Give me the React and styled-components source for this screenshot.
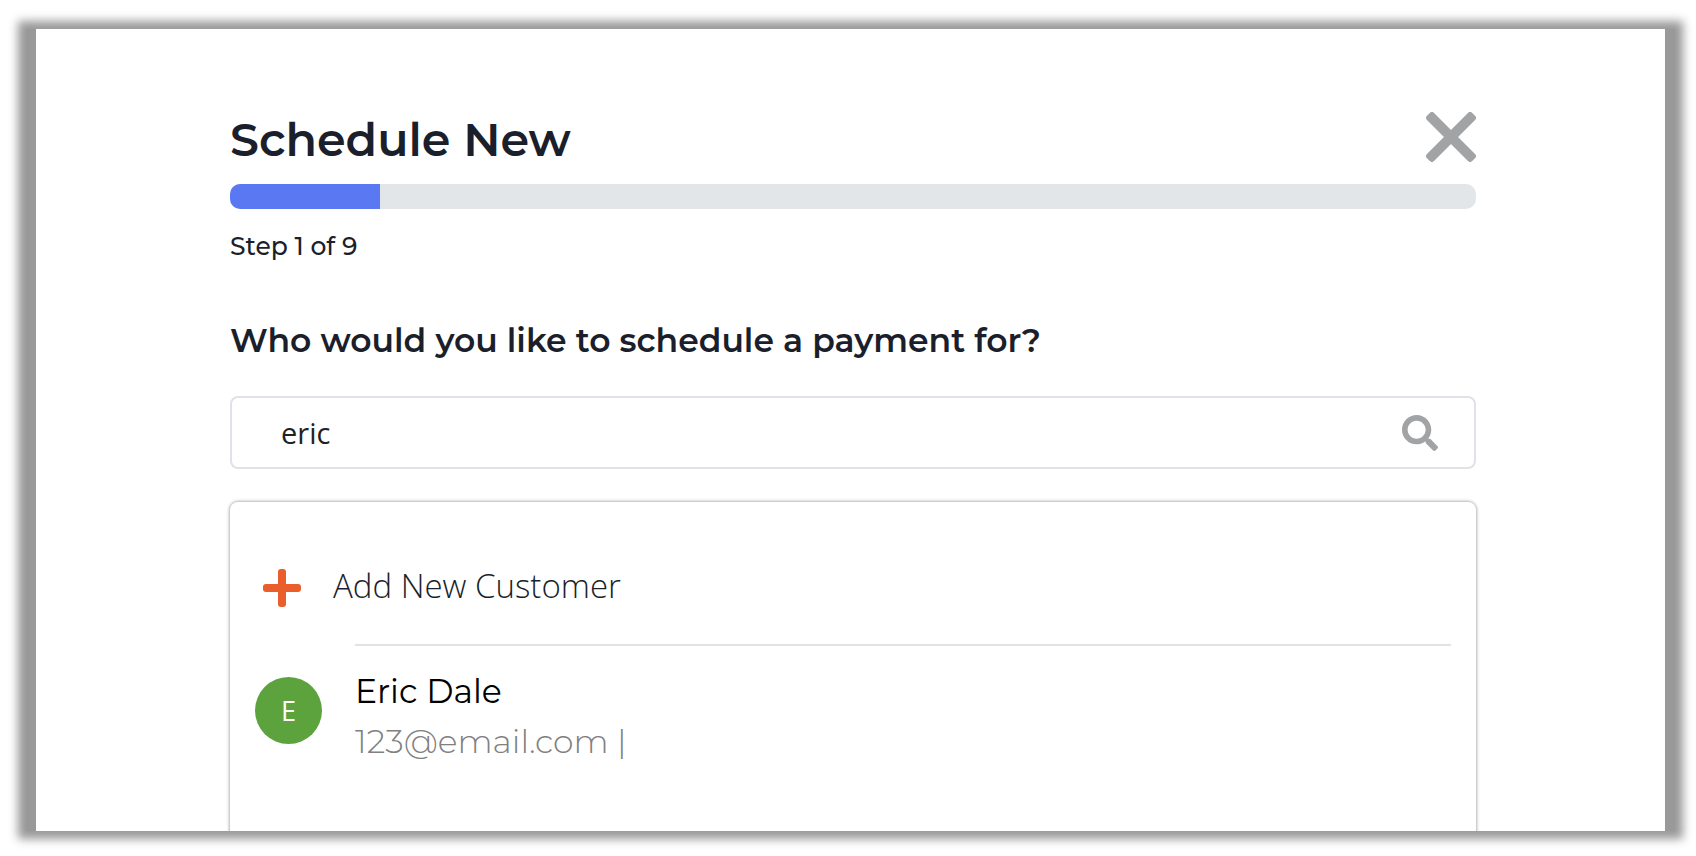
import React, { useState } from 'react'
import styled, { createGlobalStyle } from 'styled-components'
import { FaSearch } from 'react-icons/fa'

const GlobalStyle = createGlobalStyle`
  * {
    box-sizing: border-box;
  }

  body {
    margin: 0;
    background: #fff;
    color: #1b1f2c;
    font-family: Montserrat, Inter, sans-serif;
  }
`

const Page = styled.div`
  display: flex;
  height: 100vh;
  padding: 29px 21px 25px 26px;
  overflow: hidden;
`

const Frame = styled.div`
  display: flex;
  flex: 1;
  padding: 0 10px;
  background: #999;
  box-shadow: 0 0 9px 8px #999;
`

const Panel = styled.main`
  flex: 1;
  padding: 82px 189px 0 194px;
  background: #fff;
  overflow: hidden;
`

const Header = styled.header`
  display: flex;
  align-items: flex-start;
  justify-content: space-between;
`

const Title = styled.h1`
  margin: 0;
  font-size: 46px;
  font-weight: 600;
  line-height: 58px;
`

const CloseButton = styled.button`
  display: flex;
  padding: 1px 0 0;
  border: 0;
  background: none;
  color: #a1a3a5;
  cursor: pointer;
`

const Track = styled.div`
  height: 25px;
  margin-top: 15px;
  border-radius: 10px;
  background: #e3e6e8;
  overflow: hidden;
`

const Bar = styled.div`
  height: 100%;
  background: #5a78f2;
`

const Step = styled.p`
  margin: 19px 0 0;
  font-size: 25px;
  font-weight: 500;
  line-height: 36px;
`

const Question = styled.label`
  display: block;
  margin-top: 56px;
  font-size: 33px;
  font-weight: 600;
  line-height: 40px;
`

const SearchBox = styled.div`
  display: flex;
  align-items: center;
  height: 73px;
  margin-top: 36px;
  padding: 0 36px 0 49px;
  border: 2px solid #dfe2e6;
  border-radius: 8px;
  color: #a1a3a5;
`

const SearchInput = styled.input`
  flex: 1;
  min-width: 0;
  padding: 0;
  border: 0;
  outline: 0;
  background: none;
  color: #222;
  font-family: 'Open Sans', sans-serif;
  font-size: 29px;
`

const Results = styled.section`
  margin-top: 33px;
  padding: 52px 25px 120px;
  border-radius: 8px;
  box-shadow: 0 0 3px 1px rgba(0, 0, 0, 0.3);
`

const AddButton = styled.button`
  display: flex;
  align-items: center;
  gap: 32px;
  width: 100%;
  height: 68px;
  padding: 0 8px;
  border: 0;
  background: none;
  color: #1b1f2c;
  font-family: 'Open Sans', sans-serif;
  font-size: 33px;
  font-weight: 300;
  text-align: left;
  cursor: pointer;
`

const AddLabel = styled.span`
  padding-bottom: 6px;
`

const Divider = styled.hr`
  height: 2px;
  margin: 22px 0 0 100px;
  border: 0;
  background: #e1e2e3;
`

const Customer = styled.div`
  display: flex;
  align-items: flex-start;
  gap: 33px;
  margin-top: 20px;
`

const Avatar = styled.div`
  display: flex;
  align-items: center;
  justify-content: center;
  width: 67px;
  height: 67px;
  margin-top: 11px;
  border-radius: 50%;
  background: #5ca33e;
  color: #fff;
  font-family: 'Open Sans', sans-serif;
  font-size: 27px;
`

const Name = styled.p`
  margin: 0;
  color: #000;
  font-size: 33px;
  font-weight: 400;
  line-height: 50px;
`

const Email = styled(Name)`
  color: #808080;
  font-weight: 300;
`

const CloseIcon = () => (
  <svg width="50" height="50" viewBox="-25 -25 50 50" fill="currentColor">
    <g transform="rotate(45)">
      <rect x="-32" y="-5" width="64" height="10" rx="3" />
      <rect x="-5" y="-32" width="10" height="64" rx="3" />
    </g>
  </svg>
)

const PlusIcon = () => (
  <svg width="38" height="38" viewBox="0 0 38 38" fill="#ea5e2b">
    <rect x="0" y="15" width="38" height="8" rx="3" />
    <rect x="15" y="0" width="8" height="38" rx="3" />
  </svg>
)

const customers = [{ name: 'Eric Dale', email: '123@email.com' }]

const App = () => {
  const [query, setQuery] = useState('eric')
  const step = 1
  const total = 9

  return (
    <Page>
      <GlobalStyle />
      <Frame>
        <Panel>
          <Header>
            <Title>Schedule New</Title>
            <CloseButton type="button" aria-label="Close">
              <CloseIcon />
            </CloseButton>
          </Header>
          <Track>
            <Bar style={{ width: `${Math.ceil((step / total) * 100)}%` }} />
          </Track>
          <Step>
            Step {step} of {total}
          </Step>
          <Question htmlFor="customer">
            Who would you like to schedule a payment for?
          </Question>
          <SearchBox>
            <SearchInput
              id="customer"
              type="text"
              value={query}
              onChange={e => setQuery(e.target.value)}
            />
            <FaSearch size={36} />
          </SearchBox>
          <Results>
            <AddButton type="button">
              <PlusIcon />
              <AddLabel>Add New Customer</AddLabel>
            </AddButton>
            <Divider />
            {customers.map(({ name, email }) => (
              <Customer key={email}>
                <Avatar>{name[0]}</Avatar>
                <div>
                  <Name>{name}</Name>
                  <Email>{email} |</Email>
                </div>
              </Customer>
            ))}
          </Results>
        </Panel>
      </Frame>
    </Page>
  )
}

export default App
